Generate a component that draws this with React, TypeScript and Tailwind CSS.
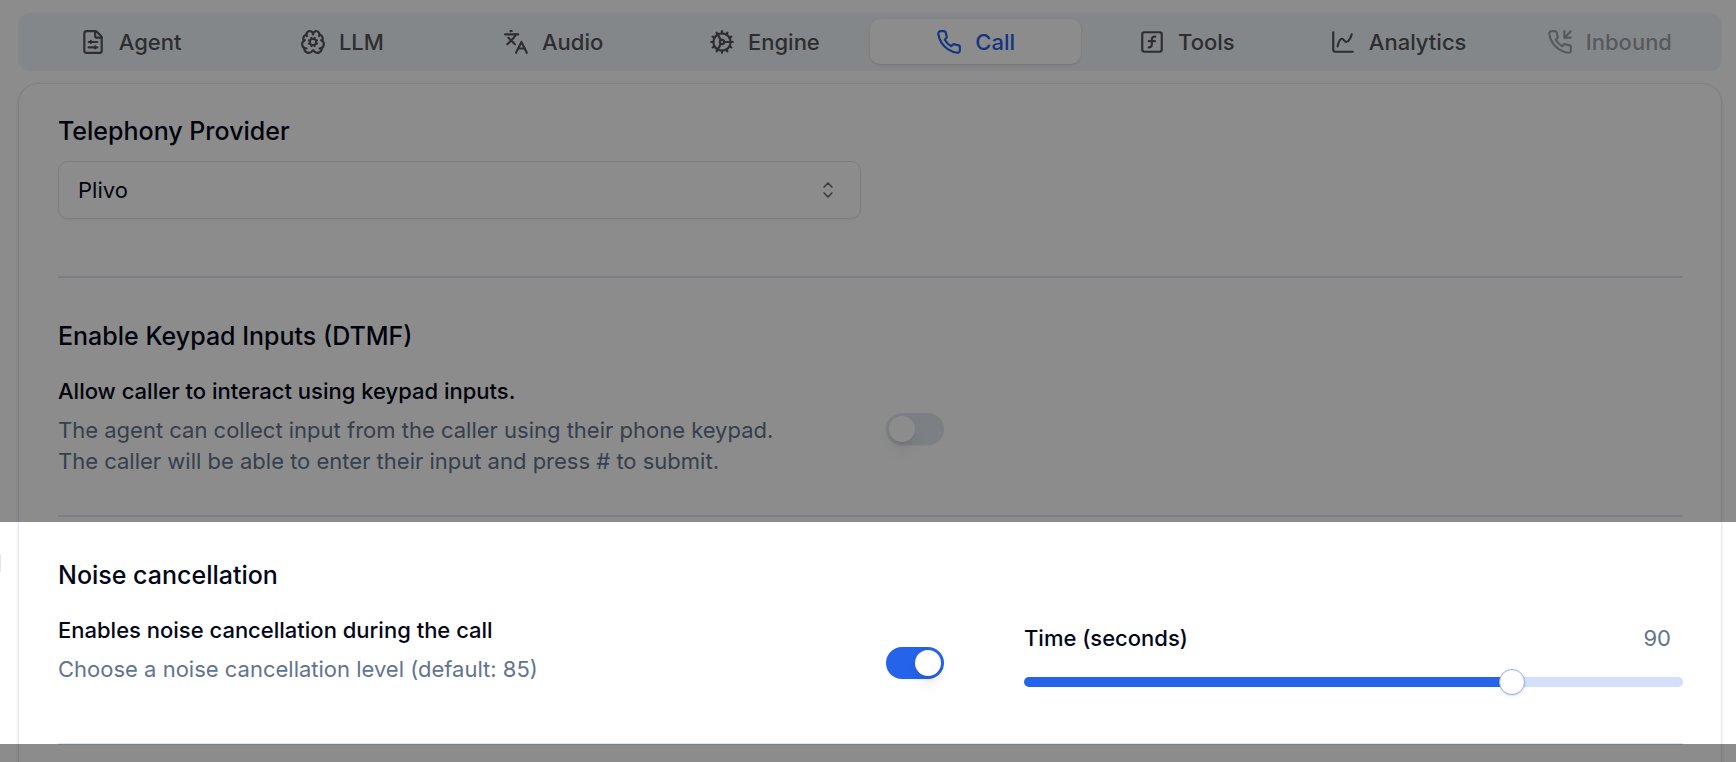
import { useState, type ComponentType, type CSSProperties, type ReactNode } from "react";
import { BrainCog, ChartSpline, Cog, FileSliders, Languages, SquareFunction } from "lucide-react";

const HANDSET =
  "M22 16.92v3a2 2 0 0 1-2.18 2 19.79 19.79 0 0 1-8.63-3.07 19.5 19.5 0 0 1-6-6 19.79 19.79 0 0 1-3.07-8.67A2 2 0 0 1 4.11 2h3a2 2 0 0 1 2 1.72 12.84 12.84 0 0 0 .7 2.81 2 2 0 0 1-.45 2.11L8.09 9.91a16 16 0 0 0 6 6l1.27-1.27a2 2 0 0 1 2.11-.45 12.84 12.84 0 0 0 2.81.7A2 2 0 0 1 22 16.92z";

type IconProps = { className?: string };

function HandsetIcon({ className, children }: IconProps & { children?: ReactNode }) {
  return (
    <svg
      viewBox="0 0 24 24"
      fill="none"
      stroke="currentColor"
      strokeWidth="2"
      strokeLinecap="round"
      strokeLinejoin="round"
      aria-hidden="true"
      className={className}
    >
      {children}
      <path d={HANDSET} />
    </svg>
  );
}

function IncomingCallIcon({ className }: IconProps) {
  return (
    <HandsetIcon className={className}>
      <path d="M16 2v6h6M22 2l-6 6" />
    </HandsetIcon>
  );
}

const tabs: { label: string; icon: ComponentType<IconProps>; disabled?: boolean }[] = [
  { label: "Agent", icon: FileSliders },
  { label: "LLM", icon: BrainCog },
  { label: "Audio", icon: Languages },
  { label: "Engine", icon: Cog },
  { label: "Call", icon: HandsetIcon },
  { label: "Tools", icon: SquareFunction },
  { label: "Analytics", icon: ChartSpline },
  { label: "Inbound", icon: IncomingCallIcon, disabled: true },
];

function TabBar({ active, onSelect }: { active: string; onSelect: (label: string) => void }) {
  return (
    <div role="tablist" className="grid grid-cols-8 rounded-xl bg-[#f0f6fa] px-[7px] pt-1.5 pb-[7px]">
      {tabs.map(({ label, icon: Icon, disabled }) => (
        <button
          key={label}
          type="button"
          role="tab"
          aria-selected={label === active}
          disabled={disabled}
          onClick={() => onSelect(label)}
          className={`flex h-[45px] items-center justify-center gap-[13px] rounded-[10px] pt-px text-[22px] font-medium ${
            label === active ? "bg-white text-[#2563eb] shadow" : "text-[#52525b]"
          } disabled:opacity-50`}
        >
          <Icon className="size-[26px]" />
          {label}
        </button>
      ))}
    </div>
  );
}

function Switch({ id, defaultChecked }: { id: string; defaultChecked?: boolean }) {
  return (
    <input
      id={id}
      type="checkbox"
      role="switch"
      defaultChecked={defaultChecked}
      className="flex h-8 w-[58px] shrink-0 appearance-none items-center rounded-full bg-slate-200 px-[3px] shadow-xs before:size-[26px] before:rounded-full before:bg-white before:shadow-lg checked:bg-[#2563eb] checked:before:translate-x-[26px]"
    />
  );
}

function ProviderSelect() {
  return (
    <div className="relative mt-3.5">
      <select
        id="provider"
        className="h-[58px] w-full appearance-none rounded-[10px] border border-slate-200 bg-white px-[19px] text-[22px] shadow-xs"
      >
        <option>Plivo</option>
        <option>Twilio</option>
      </select>
      <svg
        viewBox="0 0 15 15"
        fill="none"
        stroke="currentColor"
        strokeWidth="0.9"
        strokeLinecap="round"
        strokeLinejoin="round"
        aria-hidden="true"
        className="pointer-events-none absolute top-4 right-5 size-[26px] opacity-60"
      >
        <path d="M5.25 5.75 7.5 3.5l2.25 2.25M5.25 9.25 7.5 11.5l2.25-2.25" />
      </svg>
    </div>
  );
}

function LevelSlider() {
  const min = 60;
  const max = 100;
  const [value, setValue] = useState(90);
  const ratio = (value - min) / (max - min);
  const style = { "--fill": `calc(${ratio * 100}% + ${(0.5 - ratio) * 26}px)` } as CSSProperties;
  return (
    <div className="flex flex-col gap-[15px] pb-2">
      <div className="flex items-center justify-between pr-3">
        <label htmlFor="level" className="text-[22px] leading-8 font-medium">
          Time (seconds)
        </label>
        <output htmlFor="level" className="text-[22px] leading-8 text-slate-500">
          {value}
        </output>
      </div>
      <input
        id="level"
        type="range"
        min={min}
        max={max}
        value={value}
        onChange={(e) => setValue(Number(e.target.value))}
        style={style}
        className="h-[26px] w-full appearance-none bg-transparent [&::-webkit-slider-runnable-track]:h-2.5 [&::-webkit-slider-runnable-track]:rounded-full [&::-webkit-slider-runnable-track]:bg-[linear-gradient(to_right,#2563eb_var(--fill),#d3dffb_var(--fill))] [&::-webkit-slider-thumb]:-mt-2 [&::-webkit-slider-thumb]:size-[26px] [&::-webkit-slider-thumb]:appearance-none [&::-webkit-slider-thumb]:rounded-full [&::-webkit-slider-thumb]:border [&::-webkit-slider-thumb]:border-solid [&::-webkit-slider-thumb]:border-[#92b1f5] [&::-webkit-slider-thumb]:bg-white [&::-webkit-slider-thumb]:shadow"
      />
    </div>
  );
}

function SwitchRow({
  id,
  label,
  defaultChecked,
  children,
}: {
  id: string;
  label: string;
  defaultChecked?: boolean;
  children: ReactNode;
}) {
  return (
    <div className="flex items-center justify-between">
      <div className="self-start">
        <label htmlFor={id} className="block text-[22px] leading-8 font-medium">
          {label}
        </label>
        <p className="mt-2 text-[22px] leading-[31px] text-slate-500">{children}</p>
      </div>
      <Switch id={id} defaultChecked={defaultChecked} />
    </div>
  );
}

export default function App() {
  const [active, setActive] = useState("Call");
  return (
    <div className="relative h-screen overflow-hidden bg-white pt-[13px] pr-3.5 pl-[18px] font-['Inter',sans-serif] text-slate-950">
      <TabBar active={active} onSelect={setActive} />

      <main className="mt-3 rounded-[20px] border border-slate-200 pr-[38px] pb-12 pl-[39px] shadow-sm">
        <section className="border-b-2 border-slate-200 pt-[31px] pb-[57px]">
          <div className="w-[803px] max-w-full">
            <label htmlFor="provider" className="block text-[25px] leading-8 font-medium">
              Telephony Provider
            </label>
            <ProviderSelect />
          </div>
        </section>

        <section className="border-b-2 border-slate-200 pt-[42px] pb-8">
          <h2 className="text-[25px] leading-8 font-medium">Enable Keypad Inputs (DTMF)</h2>
          <div className="mt-[23px] grid min-h-[108px] grid-cols-[886px_1fr] gap-20">
            <SwitchRow id="keypad" label="Allow caller to interact using keypad inputs.">
              The agent can collect input from the caller using their phone keypad.
              <br />
              The caller will be able to enter their input and press # to submit.
            </SwitchRow>
          </div>
        </section>

        <section className="border-b-2 border-slate-200 pt-[42px] pb-8">
          <h2 className="text-[25px] leading-8 font-medium">Noise cancellation</h2>
          <div className="mt-[23px] grid min-h-[97px] grid-cols-[886px_1fr] content-stretch gap-20">
            <SwitchRow id="noise" label="Enables noise cancellation during the call" defaultChecked>
              Choose a noise cancellation level (default: 85)
            </SwitchRow>
            <div className="self-center">
              <LevelSlider />
            </div>
          </div>
        </section>
      </main>

      {/* Edge of the neighbouring panel */}
      <div className="absolute top-[554px] left-0 h-[18px] w-px bg-slate-200" />

      {/* Spotlight: everything except the noise cancellation band is dimmed */}
      <div className="pointer-events-none absolute inset-x-0 top-[522px] h-[222px] shadow-[0_0_0_2000px_rgba(0,0,0,0.45)]" />
    </div>
  );
}
